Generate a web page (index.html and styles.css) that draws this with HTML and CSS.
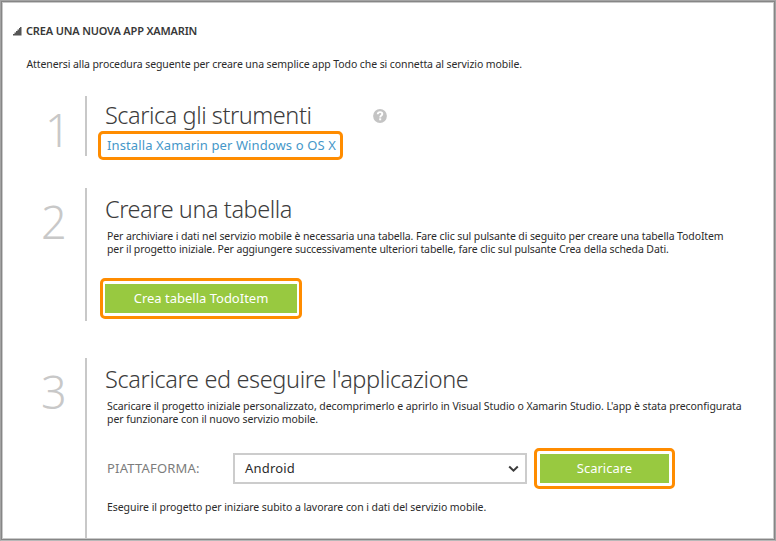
FILE: index.html
```html
<!DOCTYPE html>
<html lang="it">
<head>
<meta charset="utf-8">
<title>Crea una nuova app Xamarin</title>
<link rel="stylesheet" href="styles.css">
</head>
<body>
<div class="frame">
  <main class="panel">
    <h1 class="section-head">
      <svg class="disclosure" width="9" height="9" viewBox="0 0 9 9"><path d="M8.500 0v8.500H0V7h1.500V5.500H3V4h1.500V2.500h1.500V1H7V0z" fill="#555"/></svg>
      <span>CREA UNA NUOVA APP XAMARIN</span>
    </h1>
    <p class="intro">Attenersi alla procedura seguente per creare una semplice app Todo che si connetta al servizio mobile.</p>

    <section class="step step-tools">
      <div class="number">1</div>
      <div class="content">
        <div class="title-row">
          <h2 class="title title-tools">Scarica gli strumenti</h2>
          <svg class="help" width="14" height="14" viewBox="0 0 14 14"><circle cx="7" cy="7" r="6.900" fill="#c4c4c4"/><path d="M4.700 5.300C4.800 3.800 5.800 3.100 7.100 3.100c1.400 0 2.200.8 2.200 1.800C9.300 6.500 7.200 6.500 7.200 8.400" fill="none" stroke="#fff" stroke-width="1.900"/><rect x="6.200" y="9.300" width="2" height="2" fill="#fff"/></svg>
        </div>
        <div class="ring ring-link"><a class="link">Installa Xamarin per Windows o OS X</a></div>
      </div>
    </section>

    <section class="step step-table">
      <div class="number">2</div>
      <div class="content">
        <h2 class="title title-table">Creare una tabella</h2>
        <p class="text text-table">Per archiviare i dati nel servizio mobile è necessaria una tabella. Fare clic sul pulsante di seguito per creare una tabella TodoItem<br>per il progetto iniziale. Per aggiungere successivamente ulteriori tabelle, fare clic sul pulsante Crea della scheda Dati.</p>
        <div class="ring ring-create"><button class="button">Crea tabella TodoItem</button></div>
      </div>
    </section>

    <section class="step step-run">
      <div class="number">3</div>
      <div class="content">
        <h2 class="title title-run">Scaricare ed eseguire l'applicazione</h2>
        <p class="text text-run">Scaricare il progetto iniziale personalizzato, decomprimerlo e aprirlo in Visual Studio o Xamarin Studio. L'app è stata preconfigurata<br>per funzionare con il nuovo servizio mobile.</p>
        <div class="platform">
          <span class="label">PIATTAFORMA:</span>
          <div class="select">
            <span class="value">Android</span>
            <svg width="11" height="8" viewBox="0 0 11 8"><path d="M1.200 1.500 5.500 5.700 9.800 1.500" fill="none" stroke="#3c3c3c" stroke-width="2"/></svg>
          </div>
          <div class="ring ring-download"><button class="button">Scaricare</button></div>
        </div>
        <p class="text text-final">Eseguire il progetto per iniziare subito a lavorare con i dati del servizio mobile.</p>
      </div>
    </section>
  </main>
</div>
</body>
</html>
```
FILE: styles.css
```css
* { box-sizing: border-box; margin: 0; }
body { font-family: "Noto Sans", "Open Sans", sans-serif; color: #2b2b2b; background: #fff; }
.frame { height: 541px; border: 1px solid #a3a3a3; border-bottom-color: #b8b8b8; overflow: hidden; }
.panel { height: 539px; border: 1px solid #868686; box-shadow: inset 0 0 0 1px #c9c9c9; padding: 20px 0 0 11px; }

.section-head { display: flex; align-items: center; gap: 4px; height: 18px; font-size: 11px; font-weight: 600; letter-spacing: -.17px; line-height: 18px; color: #383838; }
.intro { margin: 15px 0 0 13.5px; font-size: 10.5px; line-height: 18px; letter-spacing: -.09px; }

.step { display: grid; grid-template-columns: 72px 1fr; }
.step-tools { height: 60px; margin-top: 23px; }
.step-table { height: 133px; margin-top: 32px; }
.step-run { height: 181px; margin-top: 37px; }
.number { height: 58px; padding: 10px 0 0 28px; font-size: 45px; font-weight: 300; line-height: 48px; color: #c8c8c8; }
.step-tools .number { padding-left: 32px; }
.content { border-left: 2px solid #c8c8c8; padding: 6px 0 0 18px; }
.step-tools .content { height: 60px; padding-top: 4px; }

.title-row { display: flex; align-items: center; gap: 62px; }
.help { margin-top: 2px; }
.title { font-size: 23.5px; font-weight: 300; line-height: 30px; color: #3c3c3c; white-space: nowrap; }
.title-tools { letter-spacing: -.46px; }
.title-table { letter-spacing: -.43px; }
.title-run { letter-spacing: -.36px; }
.text { margin: 6px 0 0 2px; font-size: 10.5px; line-height: 13px; white-space: nowrap; }
.text-table { letter-spacing: -.105px; }
.text-run { letter-spacing: -.073px; }
.text-final { margin-top: 12px; letter-spacing: -.065px; }

.ring { border: 3px solid #ff8c00; border-radius: 5px; }
.ring-link { width: 245px; height: 29px; margin: 1px 0 0 -7px; padding-left: 6px; }
.link { display: block; font-size: 13px; line-height: 23px; letter-spacing: .11px; color: #4597c9; white-space: nowrap; }
.ring-create { width: 202px; height: 41px; margin: 22px 0 0 -5px; padding: 3px 2px; }
.ring-download { width: 141px; height: 41px; padding: 3px; margin-left: 7px; }
.button { display: block; width: 100%; height: 29px; border: 0; padding: 0; background: #98c940; color: #fff; font: 13px/29px "Noto Sans", sans-serif; }

.platform { display: flex; align-items: center; height: 41px; margin-top: 22px; }
.label { width: 126px; margin-left: 2px; padding-bottom: 2px; font-size: 13px; letter-spacing: .2px; color: #7c7c7c; }
.select { display: flex; align-items: center; justify-content: space-between; width: 294px; height: 31px; border: 2px solid #ccc; padding: 0 6px 0 10px; font-size: 13px; letter-spacing: .19px; }
.value { padding-bottom: 2px; }
```
